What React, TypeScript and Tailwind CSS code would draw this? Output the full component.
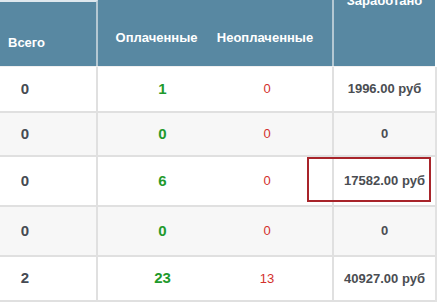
import React from 'react';

type Row = { total: string; paid: string; unpaid: string; earned: string; h: string; bg: string };

const rows: Row[] = [
    { total: '0', paid: '1', unpaid: '0', earned: '1996.00 руб', h: 'h-[46px]', bg: 'bg-white' },
    { total: '0', paid: '0', unpaid: '0', earned: '0', h: 'h-[44px]', bg: 'bg-[#f7f7f7]' },
    { total: '0', paid: '6', unpaid: '0', earned: '17582.00 руб', h: 'h-[50px]', bg: 'bg-white' },
    { total: '0', paid: '0', unpaid: '0', earned: '0', h: 'h-[50px]', bg: 'bg-[#f7f7f7]' },
    { total: '2', paid: '23', unpaid: '13', earned: '40927.00 руб', h: 'h-[45px]', bg: 'bg-white' },
];

export default function App() {
    return (
        <div className="relative w-[448px] h-[305px] overflow-hidden bg-white font-['Liberation_Sans',Arial,sans-serif]">
            {/* header */}
            <div className="flex w-[435px] h-[66px] bg-[#5888a2] text-white text-[13px] font-bold leading-4">
                <div className="w-[98px] border-t-2 border-t-[#dfe8ee] border-r-2 border-r-[#b4c8d3] pl-2 pt-[33px]">Всего</div>
                <div className="flex w-[236px] border-r-2 border-r-[#b4c8d3] pt-[30px]">
                    <span className="w-[117px] text-center">Оплаченные</span>
                    <span className="w-[100px] text-center">Неоплаченные</span>
                </div>
                <div className="flex-1 text-center -mt-[7px]">Заработано</div>
            </div>
            <div className="w-[435px] h-px bg-[#f0f0f0]" />

            {/* body */}
            <div className="w-[437px] border-r-2 border-r-[#e2e2e2]">
                {rows.map((r, i) => (
                    <div key={i} className={`flex items-center ${r.h} ${r.bg} border-b-2 border-b-[#e0e0e0]`}>
                        <div className="flex items-center h-full w-[98px] border-r-2 border-r-[#e0e0e0]">
                            <span className="w-[50px] text-center text-[15px] font-bold text-[#454a52]">{r.total}</span>
                        </div>
                        <div className="flex items-center h-full w-[236px] border-r-2 border-r-[#e0e0e0]">
                            <span className="w-[129px] text-center text-[15px] font-bold text-[#1f9a2c]">{r.paid}</span>
                            <span className="w-[80px] text-center text-[13px] text-[#d3302c]">{r.unpaid}</span>
                        </div>
                        <div className="flex-1 text-center text-[13px] font-bold text-[#4a4d52]">{r.earned}</div>
                    </div>
                ))}
            </div>

            {/* highlight box */}
            <div className="absolute left-[307px] top-[157px] w-[124px] h-[45px] border-2 border-[#a8242a]" />
        </div>
    );
}
